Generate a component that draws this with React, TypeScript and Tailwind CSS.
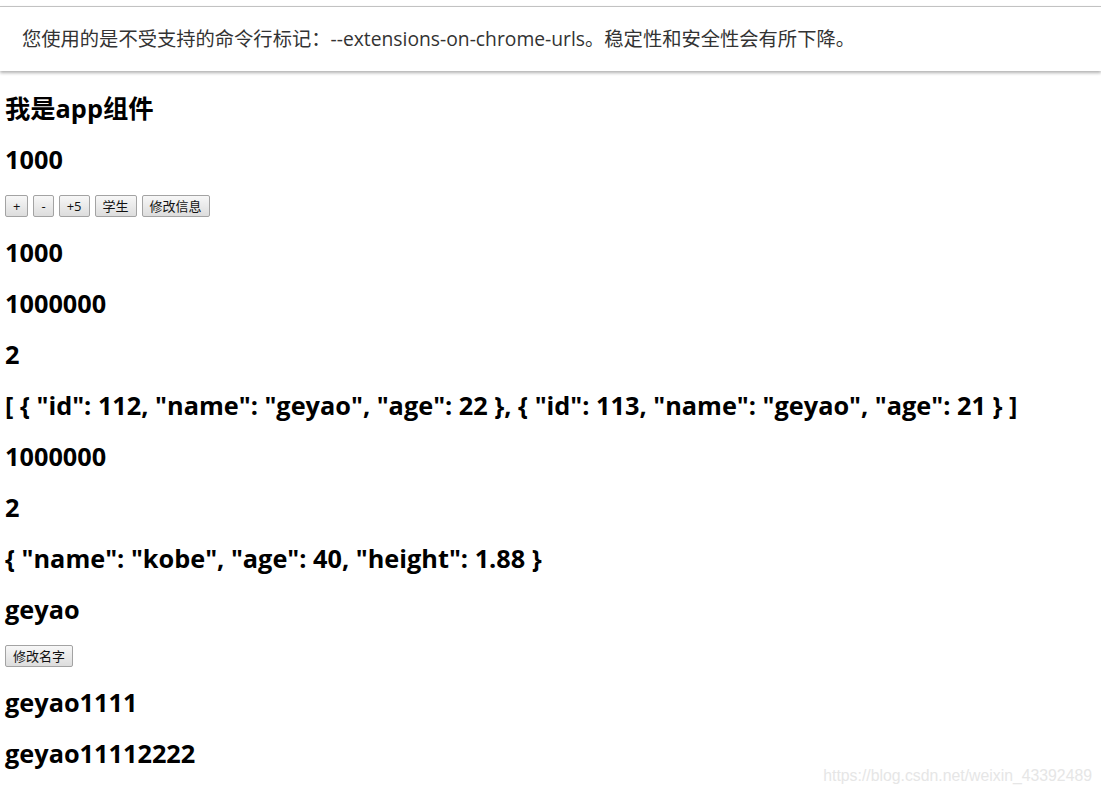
import React from "react";

const font = { fontFamily: '"Open Sans", "Noto Sans CJK SC", sans-serif' };

function Btn({ children }: { children: React.ReactNode }) {
  return (
    <button
      type="button"
      className="h-[22px] rounded-[2px] border border-[#a3a3a3] bg-gradient-to-b from-[#f7f7f7] to-[#dddddd] px-[7px] text-[13px] leading-none text-[#111]"
    >
      {children}
    </button>
  );
}

function H({ children }: { children: React.ReactNode }) {
  return <h2 className="my-[20px] text-[25.3px] font-bold leading-[31px] text-black">{children}</h2>;
}

export default function App() {
  const list = '[ { "id": 112, "name": "geyao", "age": 22 }, { "id": 113, "name": "geyao", "age": 21 } ]';
  const info = '{ "name": "kobe", "age": 40, "height": 1.88 }';
  return (
    <div className="relative min-h-[796px] w-[1101px] overflow-hidden bg-white" style={font}>
      <div className="pt-[6px]">
        <div className="border-t border-[#c2c2c2] shadow-[0_2px_3px_rgba(0,0,0,0.3)]">
          <div className="flex h-[64px] items-center pl-[22px] text-[19.3px] text-[#333]">
            您使用的是不受支持的命令行标记：--extensions-on-chrome-urls。稳定性和安全性会有所下降。
          </div>
        </div>
      </div>
      <div className="px-[5px] pt-[2px]">
        <H>我是app组件</H>
        <H>1000</H>
        <div className="flex gap-[5px]">
          <Btn>+</Btn>
          <Btn>-</Btn>
          <Btn>+5</Btn>
          <Btn>学生</Btn>
          <Btn>修改信息</Btn>
        </div>
        <H>1000</H>
        <H>1000000</H>
        <H>2</H>
        <H>{list}</H>
        <H>1000000</H>
        <H>2</H>
        <H>{info}</H>
        <H>geyao</H>
        <div className="flex">
          <Btn>修改名字</Btn>
        </div>
        <H>geyao1111</H>
        <H>geyao11112222</H>
      </div>
      <div className="absolute bottom-[8px] right-[9px] text-[15.8px] text-[#e6e6e6]" style={{ fontFamily: '"Liberation Sans", Arial, sans-serif' }}>
        https://blog.csdn.net/weixin_43392489
      </div>
    </div>
  );
}
